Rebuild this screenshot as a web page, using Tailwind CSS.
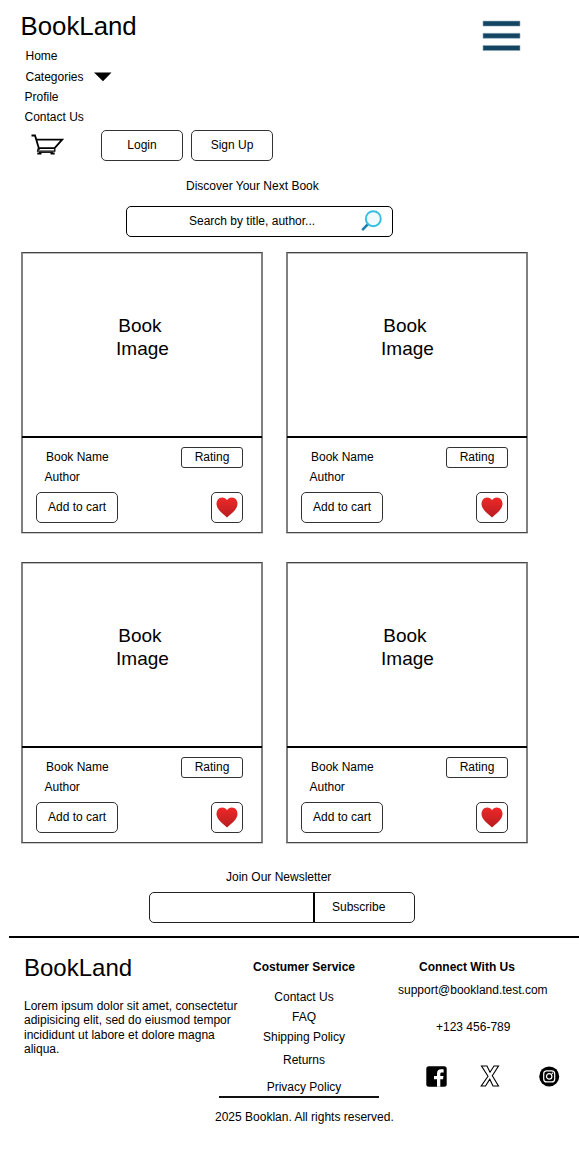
<!DOCTYPE html>
<html lang="en">
<head>
<meta charset="utf-8">
<title>BookLand</title>
<script src="https://cdn.jsdelivr.net/npm/@tailwindcss/browser@4"></script>
</head>
<body class="bg-white text-black text-[12px] leading-[20px] font-['Liberation_Sans',Arial,sans-serif] w-[579px] h-[1151px] overflow-hidden">
<header class="flex justify-between pl-[20.500px] pr-[58px] h-[129px]">
  <div>
    <h1 class="text-[25.800px] leading-[30px] pt-[11px]">BookLand</h1>
    <nav class="pt-[5px] pl-[4px]">
      <a class="block pl-[1px]">Home</a>
      <a class="flex items-center gap-[10px] pl-[1px] mt-[1px]">Categories
        <svg class="w-[18px] h-[10px]" viewBox="0 0 18 10"><path d="M0 .5h17.500L9 9.200z"/></svg>
      </a>
      <a class="block">Profile</a>
      <a class="block">Contact Us</a>
    </nav>
  </div>
  <svg class="mt-[20px] w-[39px] h-[32px]" viewBox="0 0 39 32"><g fill="#134563" stroke="#8fa8b8" stroke-width=".6"><path d="M1 1.100h37v5H1zM1 13.300h37v5H1zM1 25.500h37v5H1z"/></g></svg>
</header>

<div class="flex pl-[31px] h-[32px]">
  <svg class="mt-[5px] w-[33px] h-[22px]" viewBox="0 0 33 22" fill="none" stroke="#000"><path d="M.5 1.500h3.500L8.300 15.800M5.200 5.700H31.200L23.600 14.200H7.800" stroke-width="1.800"/><path d="M7.200 14.500L6.600 17.200H23.800V14.500" stroke-width="1.300"/><path d="M6.300 19.400h4.200M19.500 19.400h4.200" stroke-width="2"/><path d="M8 18.400h14" stroke-width="1"/></svg>
  <button class="ml-[37px] mt-px w-[82px] h-[31px] border border-[#333] rounded-[5px] pb-px">Login</button>
  <button class="ml-[8px] mt-px w-[82px] h-[31px] border border-[#333] rounded-[5px] pb-px">Sign Up</button>
</div>

<section class="pt-[15px] h-[91px]">
  <p class="pl-[186px]">Discover Your Next Book</p>
  <div class="flex items-center ml-[126px] mt-[10px] w-[267px] h-[31px] border border-black rounded-[5px] pl-[62px] pr-[10px] justify-between">
    <span class="pb-px">Search by title, author...</span>
    <svg class="w-[21px] h-[22px] mb-[2px]" viewBox="0 0 21 22" fill="none"><path d="M1.200 20.200L7.200 13.800" stroke="#1d7fae" stroke-width="2.600"/><circle cx="12.300" cy="8.700" r="7.500" fill="#f1fafe" stroke="#35bfe0" stroke-width="1.900"/></svg>
  </div>
</section>

<main id="books" class="grid grid-cols-[242px_242px] gap-x-[23px] gap-y-[29px] pl-[21px]">
  <article class="h-[281px] border-x-2 border-y border-x-[#808080] border-y-[#444] shadow-[inset_0_1px_0_#bbb,0_1px_0_#ccc]">
    <div class="h-[183px] pt-[61px] text-[19px] leading-[23px] text-center whitespace-pre-wrap pl-px">Book <br>Image</div>
    <div class="h-[2px] bg-black -mx-px"></div>
    <div class="flex justify-between pl-[22px] pr-[18px] pt-[9px]">
      <div><p class="pl-px">Book Name</p><p class="-ml-[0.500px]">Author</p></div>
      <div class="w-[62px] h-[21px] border border-[#333] rounded-[3px] text-center leading-[18px]">Rating</div>
    </div>
    <div class="flex justify-between pl-[13px] pr-[18px] pt-[5px]">
      <button class="w-[82px] h-[31px] border border-[#333] rounded-[5px] pb-px">Add to cart</button>
      <button class="w-[32px] h-[31px] border border-[#333] rounded-[5px] flex items-center justify-center">
        <svg class="w-[22px] h-[21px]" viewBox="0 0 22 21"><defs><linearGradient id="red" x2="0" y2="1"><stop stop-color="#ee2828"/><stop offset="1" stop-color="#b81d20"/></linearGradient></defs><path fill="url(#red)" d="M11 3.200C13-.3 18-.4 20.300 2.800C22.500 6.200 21.500 10 18.800 13.200C16.500 16 13.500 17.800 11 20.500C8.500 17.800 5.500 16 3.200 13.200C.5 10-.5 6.200 1.700 2.800C4-.4 9-.3 11 3.200z"/></svg>
      </button>
    </div>
  </article>
</main>

<section class="pt-[24px]">
  <p class="pl-[226px]">Join Our Newsletter</p>
  <div class="flex ml-[149px] mt-[5px] w-[266px] h-[31px] border border-[#222] rounded-[5px]">
    <div class="w-[165px] border-r-2 border-black"></div>
    <button class="pl-[17px] pb-px">Subscribe</button>
  </div>
</section>

<footer class="ml-[9px] mt-[13px] border-t-2 border-black">
  <div class="flex h-[158px]">
    <div class="w-[222px] pl-[15px] pt-[15px]">
      <h2 class="text-[24px] leading-[30px]">BookLand</h2>
      <p class="mt-[16px] w-[220px] leading-[14.400px]">Lorem ipsum dolor sit amet, consectetur adipisicing elit, sed do eiusmod tempor incididunt ut labore et dolore magna aliqua.</p>
    </div>
    <div class="w-[146px] pt-[19px] text-center">
      <h3 class="font-bold">Costumer Service</h3>
      <p class="mt-[10px]">Contact Us</p>
      <p>FAQ</p>
      <p>Shipping Policy</p>
      <p class="mt-[3px]">Returns</p>
      <p class="mt-[7px]">Privacy Policy</p>
    </div>
    <div class="w-[202px] pt-[19px]">
      <h3 class="font-bold pl-[42px]">Connect With Us</h3>
      <p class="pl-[21px] mt-[3px]">support@bookland.test.com</p>
      <p class="pl-[59px] mt-[17px]">+123 456-789</p>
      <div class="flex pl-[49px] mt-[28px] items-center">
        <svg class="w-[21px] h-[21px]" viewBox="0 0 21 21"><rect x=".3" y=".3" width="20.400" height="20.400" rx="2.500"/><path d="M11 20.800v-7.600H8V10h3V7.500C11 4.700 12.600 3.300 15 3.300h2.600v3.100h-1.800c-1.200 0-1.500.6-1.500 1.500V10h3.200l-.5 3.200h-2.700v7.600z" fill="#fff"/></svg>
        <svg class="ml-[33px] w-[20px] h-[22px]" viewBox="0 0 20 22" fill="none" stroke="#000" stroke-width="1.100"><path d="M1.500 1h5.500l3 6.200L14 1h4.500L12.300 10.700l6.200 10.300h-5.500L9.800 14.200 5.500 21H1.200l6.800-9.800z"/></svg>
        <svg class="ml-[39px] w-[21px] h-[21px]" viewBox="0 0 21 21"><circle cx="10.200" cy="10.400" r="10"/><g fill="none" stroke="#fff" stroke-width="1.200"><rect x="4.700" y="4.900" width="11" height="11" rx="3"/><circle cx="10.200" cy="10.400" r="2.700"/></g><circle cx="13.400" cy="7.200" r=".8" fill="#fff"/></svg>
      </div>
    </div>
  </div>
  <div class="ml-[210px] w-[160px] h-[2px] bg-[#111]"></div>
  <p class="pl-[206px] mt-[9px]">2025 Booklan. All rights reserved.</p>
</footer>
<script>
  const grid = document.getElementById('books');
  const card = grid.firstElementChild;
  for (let i = 0; i < 3; i++) grid.append(card.cloneNode(true));
</script>
</body>
</html>
